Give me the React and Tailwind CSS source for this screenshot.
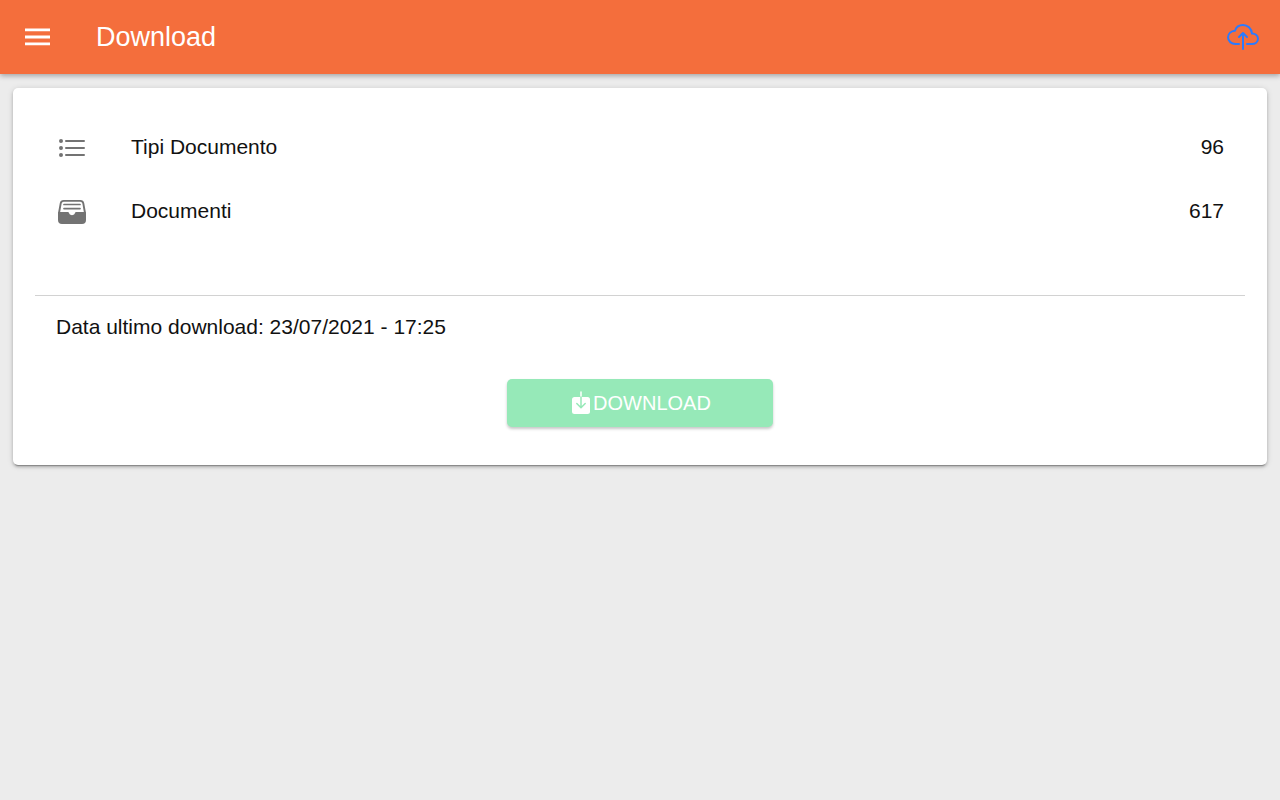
import { IoCloudUploadOutline, IoListOutline } from "react-icons/io5";

function FileTrayIcon(props) {
  return (
    <svg viewBox="0 0 32 32" fill="none" {...props}>
      <path
        d="M3 17 4.7 7.4Q5.2 4.9 7.7 4.9H24.3Q26.8 4.9 27.3 7.4L29 17"
        stroke="currentColor"
        strokeWidth="1.9"
      />
      <path d="M8 8.5H24M8 12.6H24" stroke="currentColor" strokeWidth="1.7" strokeLinecap="round" />
      <path
        d="M2.2 16H12.2Q12.7 16 12.8 16.7A3.3 3.3 0 0 0 19.2 16.7Q19.3 16 19.8 16H29.8L30 17V24Q30 28 26 28H6Q2 28 2 24V17Z"
        fill="currentColor"
      />
    </svg>
  );
}

function DownloadIcon(props) {
  return (
    <svg viewBox="0 0 24 24" fill="none" {...props}>
      <rect x="3" y="6" width="18" height="17" rx="2.5" fill="currentColor" />
      <path d="M12 1V6" stroke="currentColor" strokeWidth="1.5" strokeLinecap="round" />
      <path
        d="M12 6V16.5M7.8 12.5 12 16.7 16.2 12.5"
        stroke="#96e9b8"
        strokeWidth="1.5"
        strokeLinecap="round"
        strokeLinejoin="round"
      />
    </svg>
  );
}

const rows = [
  { label: "Tipi Documento", value: "96", Icon: IoListOutline },
  { label: "Documenti", value: "617", Icon: FileTrayIcon },
];

export default function App() {
  return (
    <div className="min-h-screen bg-[#ececec] font-['Liberation_Sans',Arial,sans-serif] text-[21px] leading-8 text-[#111111]">
      <header className="flex h-[74px] items-center bg-[#f46e3c] px-5 shadow-[0_2px_5px_rgba(0,0,0,0.3)]">
        <button type="button" aria-label="Menu" className="text-white">
          <svg className="h-[34px] w-[34px]" viewBox="0 0 34 34" fill="currentColor" aria-hidden="true">
            <path d="M5 8.5h25v2.8H5zM5 15.6h25v2.8H5zM5 22.5h25v2.8H5z" />
          </svg>
        </button>
        <h1 className="ml-[42px] flex-1 text-[27px] text-white">Download</h1>
        <button type="button" aria-label="Upload" className="mr-px text-[#2b7bff]">
          <IoCloudUploadOutline className="h-8 w-8" />
        </button>
      </header>

      <main className="px-[13px] pt-[14px]">
        <section className="rounded-[5px] bg-white px-[22px] pt-7 pb-[38px] shadow-[0_3px_1px_-2px_rgba(0,0,0,0.25),0_2px_3px_rgba(0,0,0,0.2),0_1px_6px_rgba(0,0,0,0.14)]">
          <ul>
            {rows.map(({ label, value, Icon }) => (
              <li key={label} className="flex h-16 items-center px-[21px]">
                <Icon className="h-8 w-8 text-[#737373]" aria-hidden="true" />
                <span className="ml-[43px] flex-1 pb-0.5">{label}</span>
                <span className="pb-0.5">{value}</span>
              </li>
            ))}
          </ul>
          <p className="mt-[51px] border-t border-[#d2d2d2] px-[21px] pt-[15px]">
            Data ultimo download: 23/07/2021 - 17:25
          </p>
          <div className="mt-9 flex justify-center">
            <button
              type="button"
              className="flex h-12 w-[266px] items-center justify-center rounded-[5px] bg-[#96e9b8] text-[20px] text-white shadow-[0_2px_3px_rgba(0,0,0,0.22)]"
            >
              <DownloadIcon className="h-6 w-6" aria-hidden="true" />
              DOWNLOAD
            </button>
          </div>
        </section>
      </main>
    </div>
  );
}
